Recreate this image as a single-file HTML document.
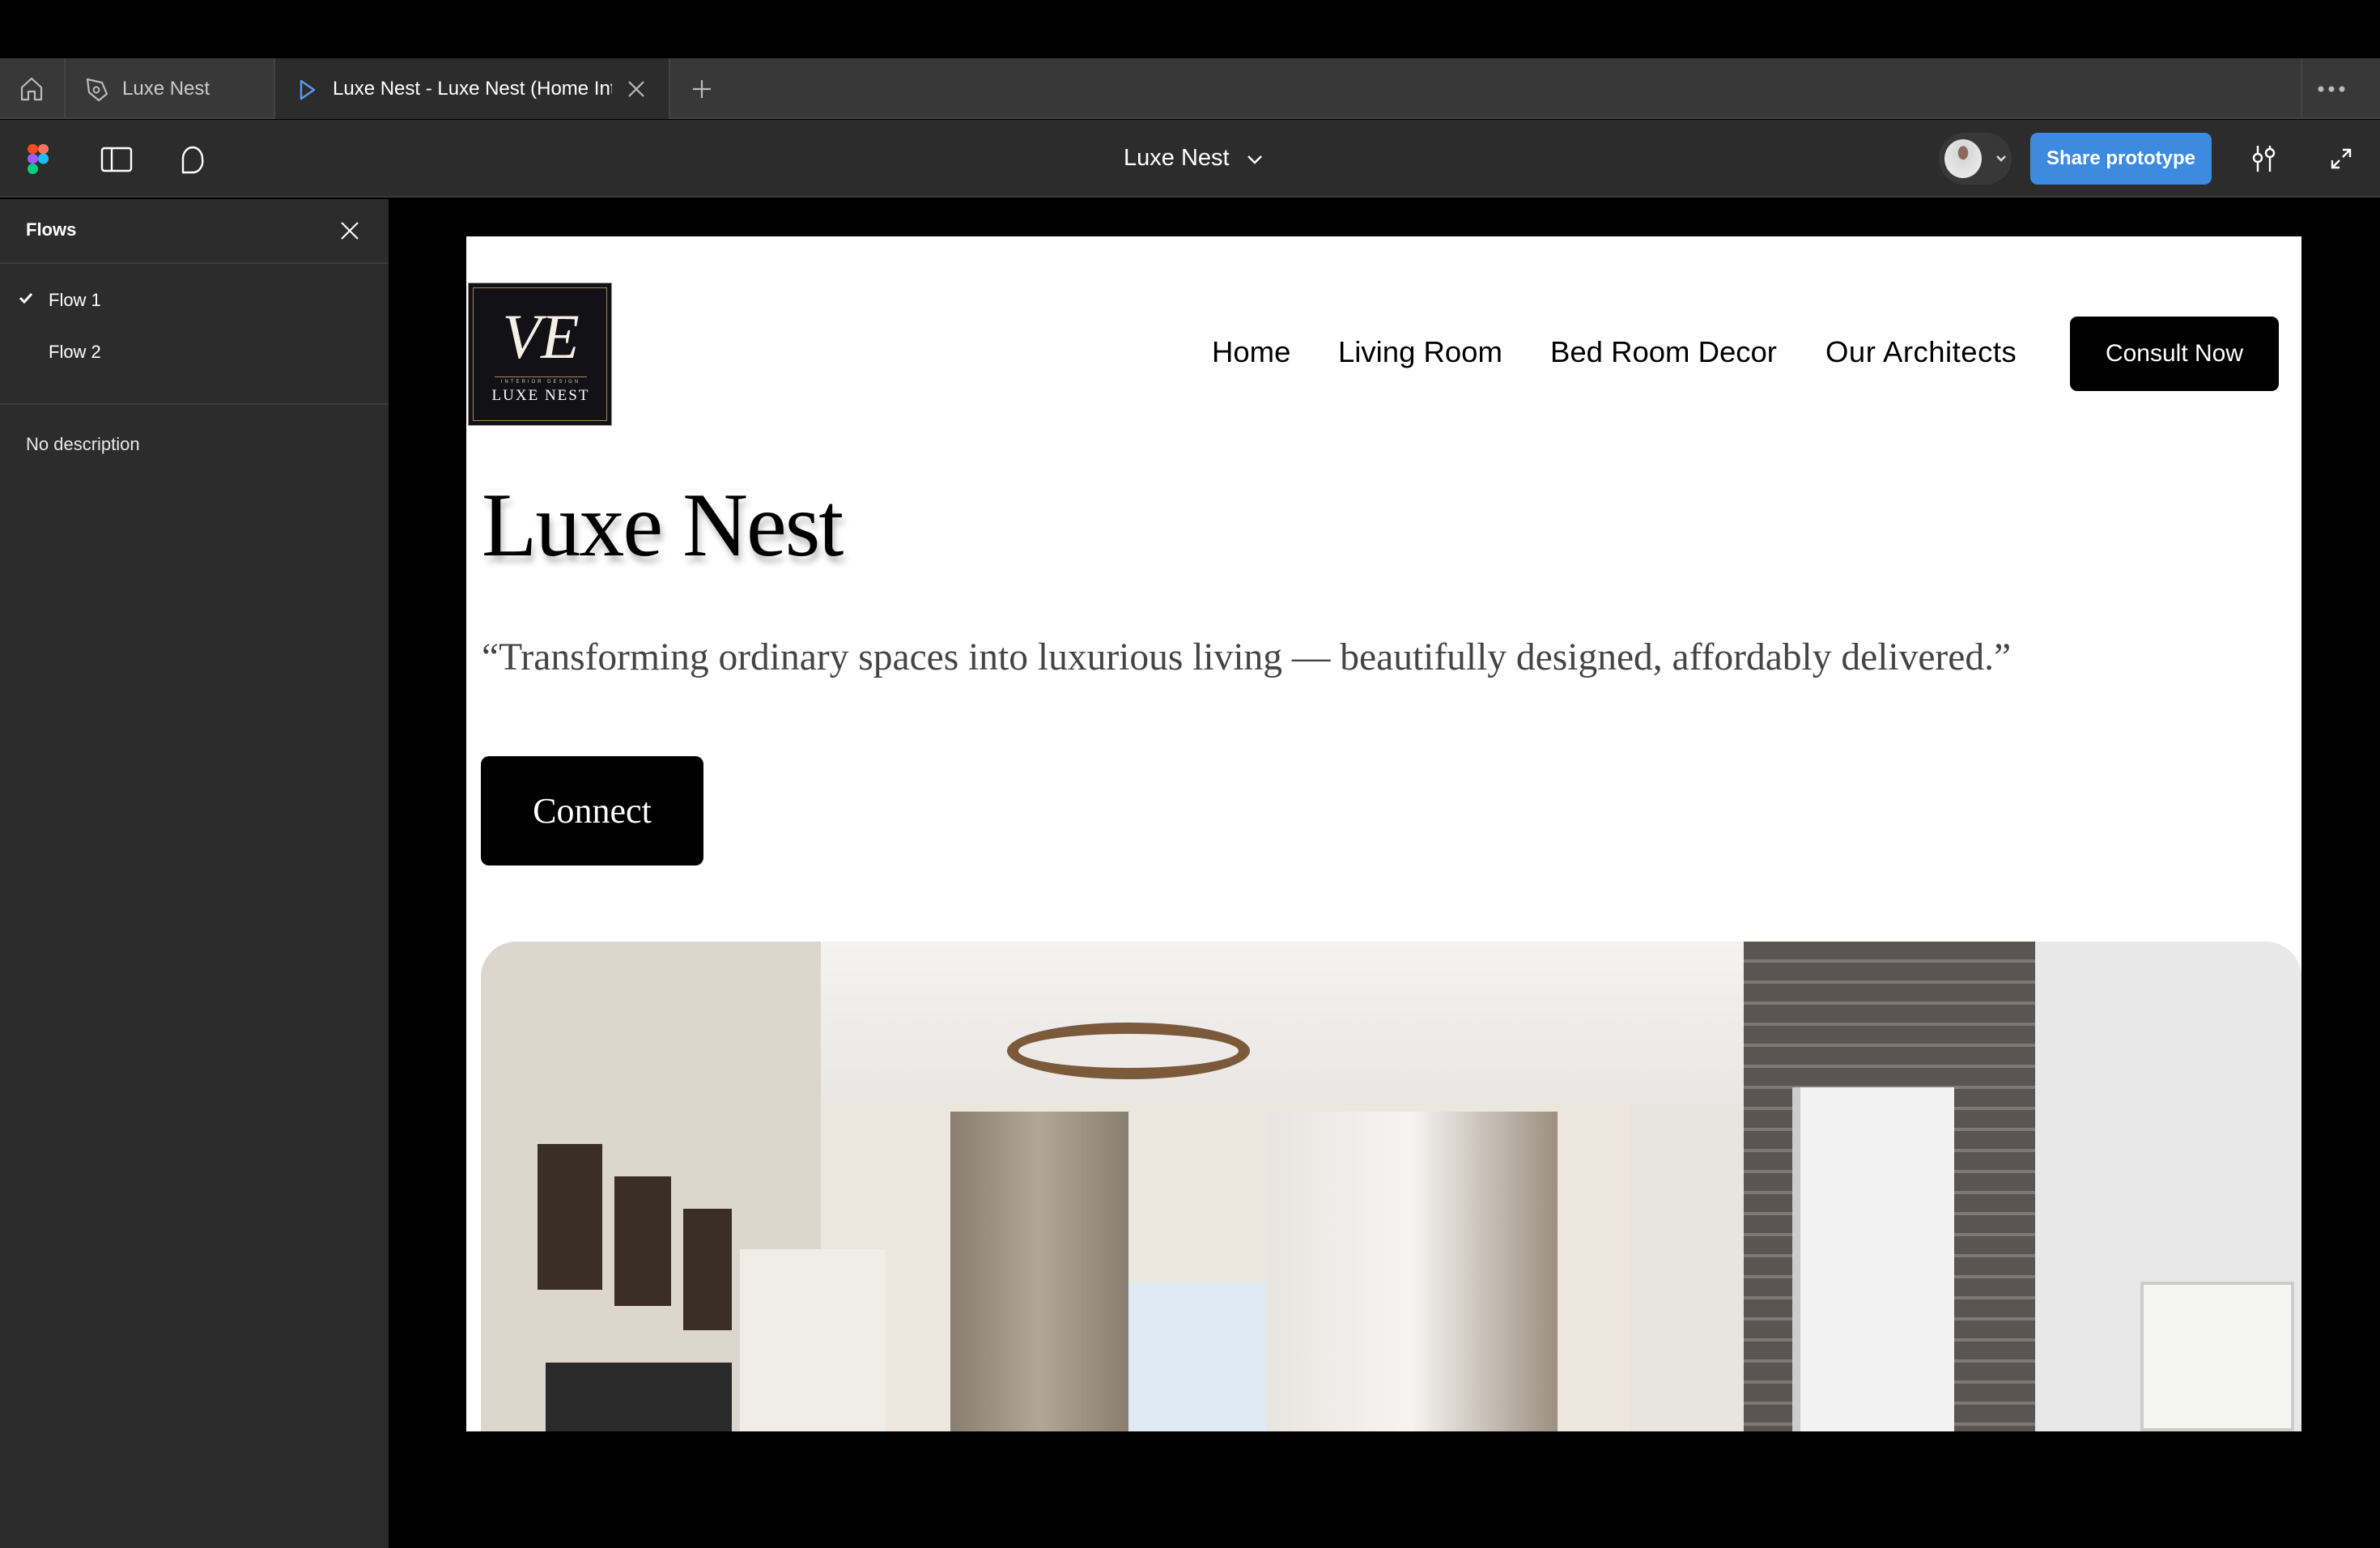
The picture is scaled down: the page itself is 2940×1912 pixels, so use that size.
<!DOCTYPE html>
<html><head><meta charset="utf-8"><style>
*{margin:0;padding:0;box-sizing:border-box}
body{width:2940px;height:1912px;background:#000;position:relative;overflow:hidden;font-family:"Liberation Sans",sans-serif}
.a{position:absolute}
.ui{color:#fff;font-size:24px;white-space:nowrap}
</style></head><body>
<!-- tab bar -->
<div class="a" style="left:0;top:72px;width:2940px;height:75px;background:#383838;border-bottom:2px solid #444"></div>
<div class="a" style="left:79px;top:72px;width:2px;height:75px;background:#444"></div>
<div class="a" style="left:338px;top:72px;width:490px;height:75px;background:#2c2c2c;border-left:2px solid #444;border-right:2px solid #444"></div>
<div class="a" style="left:2842px;top:72px;width:2px;height:75px;background:#444"></div>
<svg class="a" style="left:24px;top:94px" width="30" height="32" viewBox="0 0 30 32"><path d="M3 14 L15 3 L27 14 V29 H19 V19 H11 V29 H3 Z" fill="none" stroke="#bbb" stroke-width="2.2" stroke-linejoin="round"/></svg>
<svg class="a" style="left:104px;top:94px" width="32" height="34" viewBox="0 0 32 34"><path d="M4 4 L22 8 L28 22 L18 30 L6 20 Z" fill="none" stroke="#bbb" stroke-width="2.2" stroke-linejoin="round"/><circle cx="15" cy="17" r="3.5" fill="none" stroke="#bbb" stroke-width="2"/></svg>
<div class="a ui" style="left:151px;top:96px;color:#ccc">Luxe Nest</div>
<svg class="a" style="left:368px;top:97px" width="24" height="28" viewBox="0 0 24 28"><path d="M4 3 L20 14 L4 25 Z" fill="none" stroke="#5a9df0" stroke-width="2.4" stroke-linejoin="round"/></svg>
<div class="a ui" style="left:411px;top:96px;width:345px;overflow:hidden">Luxe Nest - Luxe Nest (Home Inte</div>
<svg class="a" style="left:774px;top:98px" width="24" height="24"><path d="M3 3 L21 21 M21 3 L3 21" stroke="#bbb" stroke-width="2.2"/></svg>
<svg class="a" style="left:855px;top:98px" width="24" height="24"><path d="M12 1 V23 M1 12 H23" stroke="#bbb" stroke-width="2.2"/></svg>
<svg class="a" style="left:2862px;top:102px" width="36" height="16"><circle cx="5" cy="8" r="3.5" fill="#bbb"/><circle cx="18" cy="8" r="3.5" fill="#bbb"/><circle cx="31" cy="8" r="3.5" fill="#bbb"/></svg>
<!-- toolbar -->
<div class="a" style="left:0;top:148px;width:2940px;height:96px;background:#2c2c2c;border-bottom:2px solid #3a3a3a"></div>
<svg class="a" style="left:34px;top:178px" width="26" height="38" viewBox="0 0 26 38"><rect x="0" y="0" width="13" height="12" rx="6" fill="#f24e1e"/><rect x="13" y="0" width="13" height="12" rx="6" fill="#ff7262"/><rect x="0" y="12" width="13" height="12" rx="6" fill="#a259ff"/><circle cx="19.5" cy="18" r="6.5" fill="#1abcfe"/><rect x="0" y="24" width="13" height="13" rx="6.5" fill="#0acf83"/></svg>
<svg class="a" style="left:124px;top:181px" width="40" height="32"><rect x="2" y="2" width="36" height="28" rx="3" fill="none" stroke="#fff" stroke-width="2.4"/><path d="M14 2 V30" stroke="#fff" stroke-width="2.4"/></svg>
<svg class="a" style="left:220px;top:178px" width="36" height="38"><path d="M6 35 V18 A12 14 0 1 1 30 18 A12 14 0 0 1 18 35 Z" fill="none" stroke="#fff" stroke-width="2.4" stroke-linejoin="round"/></svg>
<div class="a ui" style="left:1388px;top:179px;font-size:29px">Luxe Nest</div>
<svg class="a" style="left:1540px;top:190px" width="20" height="14"><path d="M2 3 L10 11 L18 3" fill="none" stroke="#fff" stroke-width="2.4"/></svg>
<div class="a" style="left:2395px;top:164px;width:90px;height:64px;border-radius:32px;background:#383838"></div>
<div class="a" style="left:2402px;top:172px;width:46px;height:48px;border-radius:50%;background:radial-gradient(ellipse at 50% 35%,#8a6a5a 0 18%,#d8d8d8 20%,#f0f0f0)"></div>
<svg class="a" style="left:2465px;top:190px" width="14" height="12"><path d="M2 3 L7 8 L12 3" fill="none" stroke="#ddd" stroke-width="2.4"/></svg>
<div class="a" style="left:2508px;top:164px;width:224px;height:64px;border-radius:9px;background:#3d8be0;color:#fff;font-size:24px;font-weight:bold;text-align:center;line-height:64px">Share prototype</div>
<svg class="a" style="left:2780px;top:178px" width="34" height="36"><path d="M9 2 V12 M9 22 V34 M24 2 V6 M24 16 V34" stroke="#fff" stroke-width="2.4"/><circle cx="9" cy="17" r="5" fill="none" stroke="#fff" stroke-width="2.4"/><circle cx="24" cy="11" r="5" fill="none" stroke="#fff" stroke-width="2.4"/></svg>
<svg class="a" style="left:2878px;top:182px" width="28" height="28"><path d="M16 3 H25 V12 M25 3 L16 12 M12 25 H3 V16 M3 25 L12 16" fill="none" stroke="#fff" stroke-width="2.4"/></svg>
<!-- left panel -->
<div class="a" style="left:0;top:246px;width:480px;height:1666px;background:#2c2c2c"></div>
<div class="a ui" style="left:32px;top:271px;font-size:22px;font-weight:bold">Flows</div>
<svg class="a" style="left:420px;top:273px" width="24" height="24"><path d="M2 2 L22 22 M22 2 L2 22" stroke="#fff" stroke-width="2"/></svg>
<div class="a" style="left:0;top:324px;width:480px;height:2px;background:#3d3d3d"></div>
<svg class="a" style="left:22px;top:360px" width="20" height="16"><path d="M3 8 L8 13 L17 3" fill="none" stroke="#fff" stroke-width="3"/></svg>
<div class="a ui" style="left:60px;top:358px;font-size:22px">Flow 1</div>
<div class="a ui" style="left:60px;top:422px;font-size:22px">Flow 2</div>
<div class="a" style="left:0;top:498px;width:480px;height:2px;background:#3d3d3d"></div>
<div class="a ui" style="left:32px;top:536px;font-size:22px;color:#e8e8e8">No description</div>
<!-- frame -->
<div class="a" style="left:576px;top:292px;width:2267px;height:1476px;background:#fff;overflow:hidden">
  <div class="a" style="left:2px;top:57px;width:178px;height:177px;background:#111116;border:1px solid #999">
    <div class="a" style="left:5px;top:5px;right:5px;bottom:5px;border:1px solid #a08a5c"></div>
    <div class="a" style="left:0;width:178px;top:26px;text-align:center;color:#f5f0e6;font-family:'Liberation Serif',serif;font-size:78px;line-height:80px;font-style:italic">VE</div>
    <div class="a" style="left:32px;width:114px;top:115px;height:1px;background:#a08a5c"></div>
    <div class="a" style="left:0;width:178px;top:119px;text-align:center;color:#ccc;font-size:6px;letter-spacing:3px">INTERIOR DESIGN</div>
    <div class="a" style="left:0;width:178px;top:128px;text-align:center;color:#fff;font-family:'Liberation Serif',serif;font-size:19px;letter-spacing:2px">LUXE NEST</div>
  </div>
  <div class="a" style="left:921px;top:122px;font-size:36.5px;color:#000;white-space:nowrap">Home</div>
  <div class="a" style="left:1077px;top:122px;font-size:36.5px;color:#000;white-space:nowrap">Living Room</div>
  <div class="a" style="left:1339px;top:122px;font-size:36.5px;color:#000;white-space:nowrap">Bed Room Decor</div>
  <div class="a" style="left:1679px;top:122px;font-size:36.5px;color:#000;white-space:nowrap;letter-spacing:0.5px">Our Architects</div>
  <div class="a" style="left:1981px;top:99px;width:258px;height:92px;background:#000;border-radius:9px;color:#fff;font-size:30px;text-align:center;line-height:92px">Consult Now</div>
  <div class="a" style="left:19px;top:293px;font-family:'Liberation Serif',serif;font-size:112px;color:#000;white-space:nowrap;letter-spacing:-2px;text-shadow:3px 8px 8px rgba(0,0,0,.25)">Luxe Nest</div>
  <div class="a" style="left:19px;top:493px;font-family:'Liberation Serif',serif;font-size:47.5px;color:#444;white-space:nowrap">“Transforming ordinary spaces into luxurious living — beautifully designed, affordably delivered.”</div>
  <div class="a" style="left:18px;top:642px;width:275px;height:135px;background:#000;border-radius:10px;color:#fff;font-family:'Liberation Serif',serif;font-size:44px;text-align:center;line-height:135px">Connect</div>
  <!-- room image -->
  <div class="a" style="left:18px;top:871px;width:2249px;height:605px;border-radius:44px 44px 0 0;overflow:hidden;background:#e8e4e0">
    <div class="a" style="left:0;top:0;width:2249px;height:200px;background:linear-gradient(#f4f3f2,#e9e6e3)"></div>
    <div class="a" style="left:0;top:0;width:420px;height:605px;background:#ddd6cd"></div>
    <div class="a" style="left:420px;top:200px;width:1000px;height:405px;background:#ede6de"></div>
    <div class="a" style="left:580px;top:210px;width:220px;height:395px;background:linear-gradient(90deg,#8a7e70,#b2a696,#8a7e70)"></div>
    <div class="a" style="left:970px;top:210px;width:360px;height:395px;background:linear-gradient(90deg,#e8e4e0,#f6f4f2,#9c8f80)"></div>
    <div class="a" style="left:800px;top:420px;width:170px;height:185px;background:#dfe9f2"></div>
    <div class="a" style="left:650px;top:100px;width:300px;height:70px;border-radius:50%;border:14px solid #7a5a3a;background:transparent"></div>
    <div class="a" style="left:1560px;top:0;width:360px;height:605px;background:repeating-linear-gradient(#5a5452 0 22px,#807874 22px 26px)"></div>
    <div class="a" style="left:1920px;top:0;width:329px;height:605px;background:#e8e8e8"></div>
    <div class="a" style="left:1620px;top:180px;width:200px;height:425px;background:#f2f2f2;border-left:10px solid #ccc"></div>
    <div class="a" style="left:70px;top:250px;width:80px;height:180px;background:#3a2e26;border:10px solid #3a2e26"></div>
    <div class="a" style="left:165px;top:290px;width:70px;height:160px;background:#3a2e26"></div>
    <div class="a" style="left:250px;top:330px;width:60px;height:150px;background:#3a2e26"></div>
    <div class="a" style="left:80px;top:520px;width:230px;height:85px;background:#2a2a2a"></div>
    <div class="a" style="left:320px;top:380px;width:180px;height:225px;background:#f0ede9"></div>
    <div class="a" style="left:2050px;top:420px;width:190px;height:185px;background:#f5f5f3;border:4px solid #ccc"></div>
  </div>
</div>
</body></html>
